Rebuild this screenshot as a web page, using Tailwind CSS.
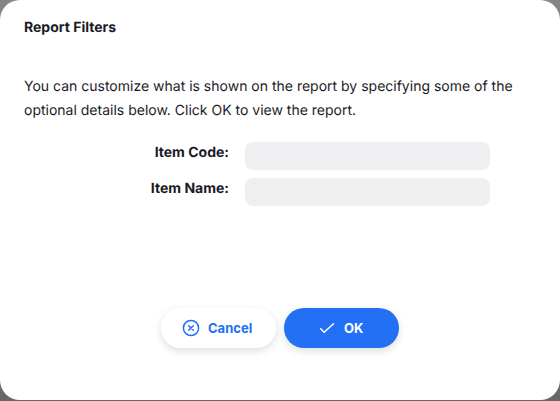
<!DOCTYPE html>
<html lang="en">
<head>
<meta charset="utf-8">
<title>Report Filters</title>
<script src="https://cdn.jsdelivr.net/npm/@tailwindcss/browser@4"></script>
</head>
<body class="h-[401px] overflow-hidden bg-linear-to-b from-[#858585] to-[#686868] font-['Inter',sans-serif] text-[#1b1b28] [text-rendering:geometricPrecision]">
<main class="flex h-[400px] w-[560px] flex-col rounded-[20px] bg-white px-6 pt-[17px]">
  <h1 class="text-[14px] leading-[22px] font-bold">Report Filters</h1>
  <p class="mt-9 text-[14px] leading-6 whitespace-nowrap">You can customize what is shown on the report by specifying some of the<br>optional details below. Click OK to view the report.</p>
  <form class="mt-[19px] flex flex-col gap-2">
    <div class="flex h-7 gap-4">
      <label for="code" class="w-[205px] pt-px text-right text-[14px] leading-5 font-bold">Item Code:</label>
      <input id="code" class="h-7 w-[245px] rounded-lg bg-[#efeff1]">
    </div>
    <div class="flex h-7 gap-4">
      <label for="name" class="w-[205px] pt-px text-right text-[14px] leading-5 font-bold">Item Name:</label>
      <input id="name" class="h-7 w-[245px] rounded-lg bg-[#efeff1]">
    </div>
  </form>
  <div class="mt-[102px] flex justify-center gap-2">
    <button class="flex h-10 w-[115px] items-center rounded-full bg-white pl-[21px] text-[13px] font-bold text-[#2370f4] shadow-[0_3px_8px_rgba(0,0,0,0.13)]">
      <svg class="mr-2 size-[18px]" viewBox="0 0 18 18" fill="none" stroke="currentColor" stroke-width="1.5" stroke-linecap="round"><circle cx="9" cy="9" r="7.6"/><path d="m6.7 6.7 4.6 4.6m0-4.6-4.6 4.6"/></svg><span class="pt-px">Cancel</span>
    </button>
    <button class="flex h-10 w-[115px] items-center rounded-full bg-[#2370f4] pl-[34px] text-[13px] font-bold text-white shadow-[0_3px_8px_rgba(0,0,0,0.13)]">
      <svg class="mr-2 size-[18px]" viewBox="0 0 18 18" fill="none" stroke="currentColor" stroke-width="1.5" stroke-linecap="round" stroke-linejoin="round"><path d="m2.7 9.8 3.5 3.5 9.3-8.6"/></svg><span class="pt-px">OK</span>
    </button>
  </div>
</main>
</body>
</html>
